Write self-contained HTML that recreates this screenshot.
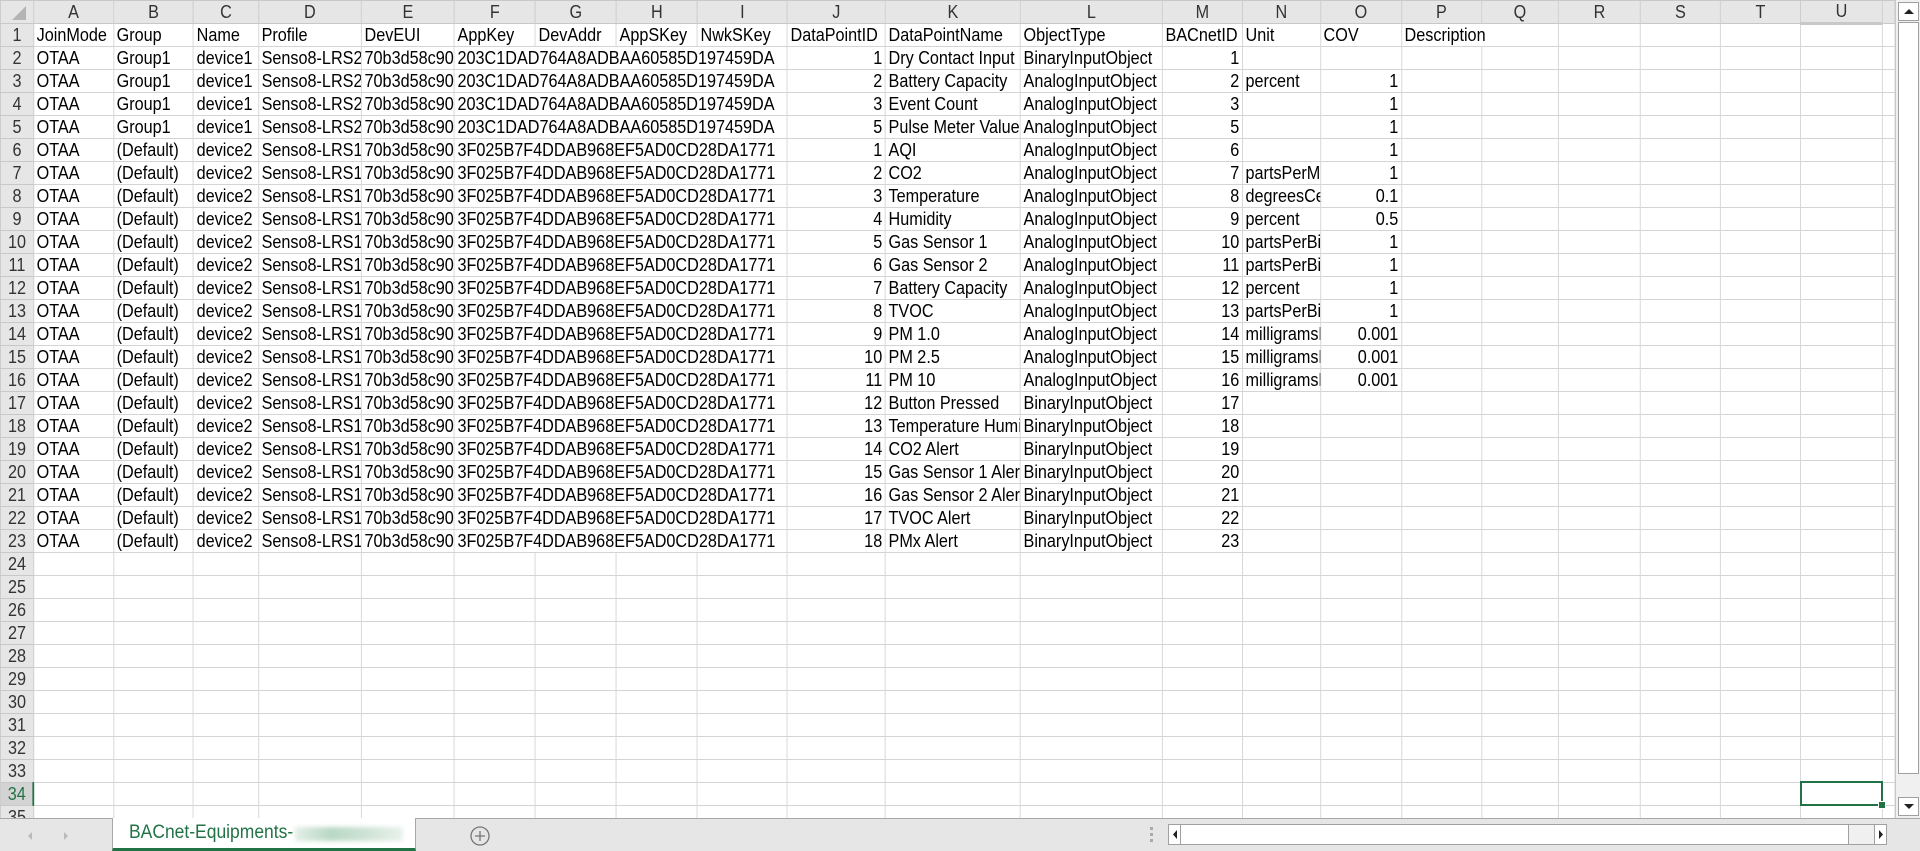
<!DOCTYPE html>
<html><head><meta charset="utf-8"><style>
*{margin:0;padding:0;box-sizing:border-box}
body{width:1920px;height:851px;overflow:hidden;background:#fff;font-family:"Liberation Sans",sans-serif;font-size:18px;color:#000;position:relative}
#grid{position:absolute;left:0;top:0;width:1895px;height:818px;overflow:hidden}
#inner{position:absolute;left:0;top:0;width:2106px;transform:scaleX(0.9);transform-origin:0 0}
table{border-collapse:collapse;table-layout:fixed;width:2106px}
td{height:23px;border:1px solid #d4d4d4;white-space:nowrap;overflow:hidden;padding:0 3px;line-height:21px;text-overflow:clip}
tr.h td{background:#e6e6e6;border-color:#c8c8c8;text-align:center;color:#333}
td.rh{background:#e6e6e6;border-color:#c8c8c8;text-align:center;color:#333;padding:0}
.r{text-align:right}
td.sel{background:#d3d3d3;color:#217346;border-bottom:3px solid #217346}
td.rsel{background:#d3d3d3;color:#217346;border-right:2px solid #217346}
#box{position:absolute;left:1800px;top:781px;width:83px;height:25px;border:2px solid #217346}
#box:after{content:"";position:absolute;right:-5px;bottom:-5px;width:6px;height:6px;background:#217346;border:1px solid #fff}
#corner{position:absolute;left:12px;top:6px;width:0;height:0;border-left:14px solid transparent;border-bottom:14px solid #b4b4b4}
#vs{position:absolute;left:1895px;top:0;width:25px;height:818px;background:#f0f0f0;border-left:1px solid #c8c8c8}
.btn{position:absolute;background:#fff;border:1px solid #a0a0a0}
#tabs{position:absolute;left:0;top:818px;width:1920px;height:33px;background:#e6e6e6;border-top:1px solid #a8a8a8}
</style></head><body>
<div id="grid"><div id="inner"><table>
<colgroup><col style="width:36.7px"><col style="width:88.9px"><col style="width:88.9px"><col style="width:72.2px"><col style="width:114.4px"><col style="width:103.3px"><col style="width:90px"><col style="width:90px"><col style="width:90px"><col style="width:100px"><col style="width:108.9px"><col style="width:150px"><col style="width:157.8px"><col style="width:88.9px"><col style="width:86.7px"><col style="width:90px"><col style="width:88.9px"><col style="width:85.6px"><col style="width:91.1px"><col style="width:88.9px"><col style="width:88.9px"><col style="width:91.1px"><col style="width:14.4px"></colgroup>
<tr class="h"><td></td><td>A</td><td>B</td><td>C</td><td>D</td><td>E</td><td>F</td><td>G</td><td>H</td><td>I</td><td>J</td><td>K</td><td>L</td><td>M</td><td>N</td><td>O</td><td>P</td><td>Q</td><td>R</td><td>S</td><td>T</td><td class="sel">U</td><td></td></tr>
<tr><td class="rh">1</td><td>JoinMode</td><td>Group</td><td>Name</td><td>Profile</td><td>DevEUI</td><td>AppKey</td><td>DevAddr</td><td>AppSKey</td><td>NwkSKey</td><td>DataPointID</td><td>DataPointName</td><td>ObjectType</td><td>BACnetID</td><td>Unit</td><td>COV</td><td colspan="2">Description</td><td></td><td></td><td></td><td></td><td></td></tr>
<tr><td class="rh">2</td><td>OTAA</td><td>Group1</td><td>device1</td><td>Senso8-LRS2</td><td>70b3d58c90</td><td colspan="4">203C1DAD764A8ADBAA60585D197459DA</td><td class="r">1</td><td>Dry Contact Input</td><td>BinaryInputObject</td><td class="r">1</td><td></td><td></td><td></td><td></td><td></td><td></td><td></td><td></td><td></td></tr>
<tr><td class="rh">3</td><td>OTAA</td><td>Group1</td><td>device1</td><td>Senso8-LRS2</td><td>70b3d58c90</td><td colspan="4">203C1DAD764A8ADBAA60585D197459DA</td><td class="r">2</td><td>Battery Capacity</td><td>AnalogInputObject</td><td class="r">2</td><td>percent</td><td class="r">1</td><td></td><td></td><td></td><td></td><td></td><td></td><td></td></tr>
<tr><td class="rh">4</td><td>OTAA</td><td>Group1</td><td>device1</td><td>Senso8-LRS2</td><td>70b3d58c90</td><td colspan="4">203C1DAD764A8ADBAA60585D197459DA</td><td class="r">3</td><td>Event Count</td><td>AnalogInputObject</td><td class="r">3</td><td></td><td class="r">1</td><td></td><td></td><td></td><td></td><td></td><td></td><td></td></tr>
<tr><td class="rh">5</td><td>OTAA</td><td>Group1</td><td>device1</td><td>Senso8-LRS2</td><td>70b3d58c90</td><td colspan="4">203C1DAD764A8ADBAA60585D197459DA</td><td class="r">5</td><td>Pulse Meter Value</td><td>AnalogInputObject</td><td class="r">5</td><td></td><td class="r">1</td><td></td><td></td><td></td><td></td><td></td><td></td><td></td></tr>
<tr><td class="rh">6</td><td>OTAA</td><td>(Default)</td><td>device2</td><td>Senso8-LRS1</td><td>70b3d58c90</td><td colspan="4">3F025B7F4DDAB968EF5AD0CD28DA1771</td><td class="r">1</td><td>AQI</td><td>AnalogInputObject</td><td class="r">6</td><td></td><td class="r">1</td><td></td><td></td><td></td><td></td><td></td><td></td><td></td></tr>
<tr><td class="rh">7</td><td>OTAA</td><td>(Default)</td><td>device2</td><td>Senso8-LRS1</td><td>70b3d58c90</td><td colspan="4">3F025B7F4DDAB968EF5AD0CD28DA1771</td><td class="r">2</td><td>CO2</td><td>AnalogInputObject</td><td class="r">7</td><td>partsPerMillion</td><td class="r">1</td><td></td><td></td><td></td><td></td><td></td><td></td><td></td></tr>
<tr><td class="rh">8</td><td>OTAA</td><td>(Default)</td><td>device2</td><td>Senso8-LRS1</td><td>70b3d58c90</td><td colspan="4">3F025B7F4DDAB968EF5AD0CD28DA1771</td><td class="r">3</td><td>Temperature</td><td>AnalogInputObject</td><td class="r">8</td><td>degreesCelsius</td><td class="r">0.1</td><td></td><td></td><td></td><td></td><td></td><td></td><td></td></tr>
<tr><td class="rh">9</td><td>OTAA</td><td>(Default)</td><td>device2</td><td>Senso8-LRS1</td><td>70b3d58c90</td><td colspan="4">3F025B7F4DDAB968EF5AD0CD28DA1771</td><td class="r">4</td><td>Humidity</td><td>AnalogInputObject</td><td class="r">9</td><td>percent</td><td class="r">0.5</td><td></td><td></td><td></td><td></td><td></td><td></td><td></td></tr>
<tr><td class="rh">10</td><td>OTAA</td><td>(Default)</td><td>device2</td><td>Senso8-LRS1</td><td>70b3d58c90</td><td colspan="4">3F025B7F4DDAB968EF5AD0CD28DA1771</td><td class="r">5</td><td>Gas Sensor 1</td><td>AnalogInputObject</td><td class="r">10</td><td>partsPerBillion</td><td class="r">1</td><td></td><td></td><td></td><td></td><td></td><td></td><td></td></tr>
<tr><td class="rh">11</td><td>OTAA</td><td>(Default)</td><td>device2</td><td>Senso8-LRS1</td><td>70b3d58c90</td><td colspan="4">3F025B7F4DDAB968EF5AD0CD28DA1771</td><td class="r">6</td><td>Gas Sensor 2</td><td>AnalogInputObject</td><td class="r">11</td><td>partsPerBillion</td><td class="r">1</td><td></td><td></td><td></td><td></td><td></td><td></td><td></td></tr>
<tr><td class="rh">12</td><td>OTAA</td><td>(Default)</td><td>device2</td><td>Senso8-LRS1</td><td>70b3d58c90</td><td colspan="4">3F025B7F4DDAB968EF5AD0CD28DA1771</td><td class="r">7</td><td>Battery Capacity</td><td>AnalogInputObject</td><td class="r">12</td><td>percent</td><td class="r">1</td><td></td><td></td><td></td><td></td><td></td><td></td><td></td></tr>
<tr><td class="rh">13</td><td>OTAA</td><td>(Default)</td><td>device2</td><td>Senso8-LRS1</td><td>70b3d58c90</td><td colspan="4">3F025B7F4DDAB968EF5AD0CD28DA1771</td><td class="r">8</td><td>TVOC</td><td>AnalogInputObject</td><td class="r">13</td><td>partsPerBillion</td><td class="r">1</td><td></td><td></td><td></td><td></td><td></td><td></td><td></td></tr>
<tr><td class="rh">14</td><td>OTAA</td><td>(Default)</td><td>device2</td><td>Senso8-LRS1</td><td>70b3d58c90</td><td colspan="4">3F025B7F4DDAB968EF5AD0CD28DA1771</td><td class="r">9</td><td>PM 1.0</td><td>AnalogInputObject</td><td class="r">14</td><td>milligramsPerCubicMeter</td><td class="r">0.001</td><td></td><td></td><td></td><td></td><td></td><td></td><td></td></tr>
<tr><td class="rh">15</td><td>OTAA</td><td>(Default)</td><td>device2</td><td>Senso8-LRS1</td><td>70b3d58c90</td><td colspan="4">3F025B7F4DDAB968EF5AD0CD28DA1771</td><td class="r">10</td><td>PM 2.5</td><td>AnalogInputObject</td><td class="r">15</td><td>milligramsPerCubicMeter</td><td class="r">0.001</td><td></td><td></td><td></td><td></td><td></td><td></td><td></td></tr>
<tr><td class="rh">16</td><td>OTAA</td><td>(Default)</td><td>device2</td><td>Senso8-LRS1</td><td>70b3d58c90</td><td colspan="4">3F025B7F4DDAB968EF5AD0CD28DA1771</td><td class="r">11</td><td>PM 10</td><td>AnalogInputObject</td><td class="r">16</td><td>milligramsPerCubicMeter</td><td class="r">0.001</td><td></td><td></td><td></td><td></td><td></td><td></td><td></td></tr>
<tr><td class="rh">17</td><td>OTAA</td><td>(Default)</td><td>device2</td><td>Senso8-LRS1</td><td>70b3d58c90</td><td colspan="4">3F025B7F4DDAB968EF5AD0CD28DA1771</td><td class="r">12</td><td>Button Pressed</td><td>BinaryInputObject</td><td class="r">17</td><td></td><td></td><td></td><td></td><td></td><td></td><td></td><td></td><td></td></tr>
<tr><td class="rh">18</td><td>OTAA</td><td>(Default)</td><td>device2</td><td>Senso8-LRS1</td><td>70b3d58c90</td><td colspan="4">3F025B7F4DDAB968EF5AD0CD28DA1771</td><td class="r">13</td><td>Temperature Humidity Alert</td><td>BinaryInputObject</td><td class="r">18</td><td></td><td></td><td></td><td></td><td></td><td></td><td></td><td></td><td></td></tr>
<tr><td class="rh">19</td><td>OTAA</td><td>(Default)</td><td>device2</td><td>Senso8-LRS1</td><td>70b3d58c90</td><td colspan="4">3F025B7F4DDAB968EF5AD0CD28DA1771</td><td class="r">14</td><td>CO2 Alert</td><td>BinaryInputObject</td><td class="r">19</td><td></td><td></td><td></td><td></td><td></td><td></td><td></td><td></td><td></td></tr>
<tr><td class="rh">20</td><td>OTAA</td><td>(Default)</td><td>device2</td><td>Senso8-LRS1</td><td>70b3d58c90</td><td colspan="4">3F025B7F4DDAB968EF5AD0CD28DA1771</td><td class="r">15</td><td>Gas Sensor 1 Alert</td><td>BinaryInputObject</td><td class="r">20</td><td></td><td></td><td></td><td></td><td></td><td></td><td></td><td></td><td></td></tr>
<tr><td class="rh">21</td><td>OTAA</td><td>(Default)</td><td>device2</td><td>Senso8-LRS1</td><td>70b3d58c90</td><td colspan="4">3F025B7F4DDAB968EF5AD0CD28DA1771</td><td class="r">16</td><td>Gas Sensor 2 Alert</td><td>BinaryInputObject</td><td class="r">21</td><td></td><td></td><td></td><td></td><td></td><td></td><td></td><td></td><td></td></tr>
<tr><td class="rh">22</td><td>OTAA</td><td>(Default)</td><td>device2</td><td>Senso8-LRS1</td><td>70b3d58c90</td><td colspan="4">3F025B7F4DDAB968EF5AD0CD28DA1771</td><td class="r">17</td><td>TVOC Alert</td><td>BinaryInputObject</td><td class="r">22</td><td></td><td></td><td></td><td></td><td></td><td></td><td></td><td></td><td></td></tr>
<tr><td class="rh">23</td><td>OTAA</td><td>(Default)</td><td>device2</td><td>Senso8-LRS1</td><td>70b3d58c90</td><td colspan="4">3F025B7F4DDAB968EF5AD0CD28DA1771</td><td class="r">18</td><td>PMx Alert</td><td>BinaryInputObject</td><td class="r">23</td><td></td><td></td><td></td><td></td><td></td><td></td><td></td><td></td><td></td></tr>
<tr><td class="rh">24</td><td></td><td></td><td></td><td></td><td></td><td></td><td></td><td></td><td></td><td></td><td></td><td></td><td></td><td></td><td></td><td></td><td></td><td></td><td></td><td></td><td></td><td></td></tr>
<tr><td class="rh">25</td><td></td><td></td><td></td><td></td><td></td><td></td><td></td><td></td><td></td><td></td><td></td><td></td><td></td><td></td><td></td><td></td><td></td><td></td><td></td><td></td><td></td><td></td></tr>
<tr><td class="rh">26</td><td></td><td></td><td></td><td></td><td></td><td></td><td></td><td></td><td></td><td></td><td></td><td></td><td></td><td></td><td></td><td></td><td></td><td></td><td></td><td></td><td></td><td></td></tr>
<tr><td class="rh">27</td><td></td><td></td><td></td><td></td><td></td><td></td><td></td><td></td><td></td><td></td><td></td><td></td><td></td><td></td><td></td><td></td><td></td><td></td><td></td><td></td><td></td><td></td></tr>
<tr><td class="rh">28</td><td></td><td></td><td></td><td></td><td></td><td></td><td></td><td></td><td></td><td></td><td></td><td></td><td></td><td></td><td></td><td></td><td></td><td></td><td></td><td></td><td></td><td></td></tr>
<tr><td class="rh">29</td><td></td><td></td><td></td><td></td><td></td><td></td><td></td><td></td><td></td><td></td><td></td><td></td><td></td><td></td><td></td><td></td><td></td><td></td><td></td><td></td><td></td><td></td></tr>
<tr><td class="rh">30</td><td></td><td></td><td></td><td></td><td></td><td></td><td></td><td></td><td></td><td></td><td></td><td></td><td></td><td></td><td></td><td></td><td></td><td></td><td></td><td></td><td></td><td></td></tr>
<tr><td class="rh">31</td><td></td><td></td><td></td><td></td><td></td><td></td><td></td><td></td><td></td><td></td><td></td><td></td><td></td><td></td><td></td><td></td><td></td><td></td><td></td><td></td><td></td><td></td></tr>
<tr><td class="rh">32</td><td></td><td></td><td></td><td></td><td></td><td></td><td></td><td></td><td></td><td></td><td></td><td></td><td></td><td></td><td></td><td></td><td></td><td></td><td></td><td></td><td></td><td></td></tr>
<tr><td class="rh">33</td><td></td><td></td><td></td><td></td><td></td><td></td><td></td><td></td><td></td><td></td><td></td><td></td><td></td><td></td><td></td><td></td><td></td><td></td><td></td><td></td><td></td><td></td></tr>
<tr><td class="rh rsel">34</td><td></td><td></td><td></td><td></td><td></td><td></td><td></td><td></td><td></td><td></td><td></td><td></td><td></td><td></td><td></td><td></td><td></td><td></td><td></td><td></td><td></td><td></td></tr>
<tr><td class="rh">35</td><td></td><td></td><td></td><td></td><td></td><td></td><td></td><td></td><td></td><td></td><td></td><td></td><td></td><td></td><td></td><td></td><td></td><td></td><td></td><td></td><td></td><td></td></tr>
</table></div>
<div id="corner"></div>
<div id="box"></div>
</div>
<div id="vs">
<div class="btn" style="left:2px;top:2px;width:21px;height:19px"><svg width="19" height="17"><path d="M5 11 L10 6 L15 11Z" fill="#222"/></svg></div>
<div class="btn" style="left:2px;top:22px;width:21px;height:752px"></div>
<div class="btn" style="left:2px;top:797px;width:21px;height:19px"><svg width="19" height="17"><path d="M5 6 L10 11 L15 6Z" fill="#222"/></svg></div>
</div>
<div id="tabs">
<svg style="position:absolute;left:24px;top:10px" width="50" height="14"><path d="M8 3 L4 7 L8 11Z" fill="#bbb"/><path d="M40 3 L44 7 L40 11Z" fill="#bbb"/></svg>
<div style="position:absolute;left:112px;top:-1px;width:304px;height:33px;background:#fff;border-left:1px solid #a8a8a8;border-right:1px solid #a8a8a8;border-bottom:3px solid #217346;color:#217346;font-size:19px;line-height:30px;padding-left:16px;white-space:nowrap"><span style="display:inline-block;transform:scaleX(0.92);transform-origin:0 50%">BACnet-Equipments-</span><span style="position:absolute;left:182px;top:9px;width:108px;height:14px;background:linear-gradient(90deg,#e4efe8,#b9d8c4,#cfe3d6,#e9f2ec);filter:blur(2px)"></span></div>
<svg style="position:absolute;left:469px;top:6px" width="22" height="22"><circle cx="11" cy="11" r="9" fill="none" stroke="#777" stroke-width="1.3"/><path d="M11 6V16M6 11H16" stroke="#777" stroke-width="1.3"/></svg>
<div style="position:absolute;left:1150px;top:8px;width:3px;height:16px;background:repeating-linear-gradient(#aaa 0 3px,transparent 3px 6px)"></div>
<div style="position:absolute;left:1168px;top:5px;width:719px;height:21px;background:#f0f0f0;border:1px solid #a0a0a0">
<div style="position:absolute;left:0;top:0;width:12px;height:19px;background:#fff;border-right:1px solid #a0a0a0"><svg width="12" height="19"><path d="M8 5 L4 9.5 L8 14Z" fill="#222"/></svg></div>
<div style="position:absolute;left:12px;top:0;width:668px;height:19px;background:#fff;border-right:1px solid #a0a0a0"></div>
<div style="position:absolute;right:0;top:0;width:12px;height:19px;background:#fff;border-left:1px solid #a0a0a0"><svg width="12" height="19"><path d="M4 5 L8 9.5 L4 14Z" fill="#222"/></svg></div>
</div>
</div>
</body></html>
